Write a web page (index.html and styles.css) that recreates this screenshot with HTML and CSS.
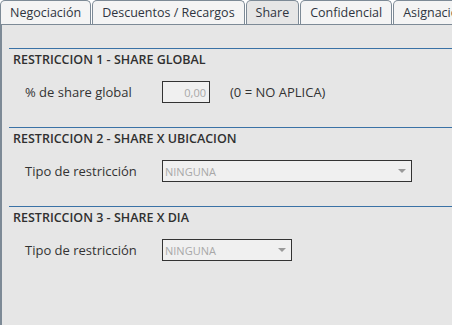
FILE: index.html
```html
<!DOCTYPE html>
<html>
    <head>
        <title>Share</title>
        <link rel="stylesheet" href="styles.css">
    </head>
    <body>
        <ul class="tabs">
            <li class="tab">Negociación</li>
            <li class="tab">Descuentos / Recargos</li>
            <li class="tab active">Share</li>
            <li class="tab">Confidencial</li>
            <li class="tab">Asignación</li>
        </ul>

        <div class="panel">

            <div class="section">
                <h3>RESTRICCION 1 - SHARE GLOBAL</h3>
                <div class="row">
                    <label>% de share global</label>
                    <input class="num" type="text" value="0,00" disabled>
                    <span class="hint">(0 = NO APLICA)</span>
                </div>
            </div>

            <div class="section">
                <h3>RESTRICCION 2 - SHARE X UBICACION</h3>
                <div class="row">
                    <label>Tipo de restricción</label>
                    <div class="combo wide">
                        <select disabled><option>NINGUNA</option></select>
                        <span class="arrow"></span>
                    </div>
                </div>
            </div>

            <div class="section">
                <h3>RESTRICCION 3 - SHARE X DIA</h3>
                <div class="row">
                    <label>Tipo de restricción</label>
                    <div class="combo short">
                        <select disabled><option>NINGUNA</option></select>
                        <span class="arrow"></span>
                    </div>
                </div>
            </div>

        </div>
    </body>
</html>
```

FILE: styles.css
```css
html, body{
    margin: 0;
    height: 100%;
    overflow: hidden;
}

body{
    background-color: #ffffff;
    font-family: "Open Sans", "Noto Sans", sans-serif;
    font-size: 13px;
    color: #333333;
    display: flex;
    flex-direction: column;
}

.tabs{
    list-style: none;
    margin: 0;
    padding: 0;
    display: flex;
    gap: 1px;
    white-space: nowrap;
    overflow: hidden;
    border-bottom: 1px solid #7d8a96;
    height: 24px;
    flex-shrink: 0;
}

.tab{
    height: 24px;
    line-height: 23px;
    padding: 0 9px;
    font-size: 12.5px;
    background-color: #f4f4f4;
    border: 1px solid #7d8a96;
    border-bottom: none;
    border-radius: 5px 5px 0 0;
    box-sizing: border-box;
    color: #2f3440;
}

.tab.active{
    background-color: #e6e6e6;
    height: 25px;
    margin-bottom: -1px;
}

.panel{
    flex: 1;
    background-color: #e6e6e6;
    border-left: 2px solid #7d8a96;
    padding: 23px 0 0 7px;
}

.section{
    border-top: 1px solid #3a72a6;
    padding: 3px 0 0 4px;
}

.section h3{
    margin: 0;
    font-size: 12.5px;
    font-weight: 600;
    line-height: 16px;
    color: #303030;
}

.row{
    display: flex;
    align-items: center;
    margin: 13px 0 24px 12px;
    height: 22px;
}

.row label{
    width: 137px;
    color: #333333;
}

.num{
    width: 48px;
    height: 22px;
    box-sizing: border-box;
    border: 1px solid #333333;
    background-color: #f0f0f0;
    color: #a8a8a8;
    font-family: inherit;
    font-size: 11px;
    text-align: right;
    padding: 0 3px;
    margin: 0;
}

.hint{
    margin-left: 20px;
}

.combo{
    position: relative;
    height: 22px;
}

.combo.wide{
    width: 250px;
}

.combo.short{
    width: 130px;
}

.combo select{
    appearance: none;
    width: 100%;
    height: 22px;
    box-sizing: border-box;
    border: 1px solid #333333;
    border-radius: 0;
    background-color: #f0f0f0;
    color: #a8a8a8;
    font-family: inherit;
    font-size: 11px;
    padding: 0 2px;
    margin: 0;
    opacity: 1;
}

.arrow{
    position: absolute;
    right: 6px;
    top: 9px;
    width: 0;
    height: 0;
    border-left: 4px solid transparent;
    border-right: 4px solid transparent;
    border-top: 4px solid #9a9a9a;
}
```
